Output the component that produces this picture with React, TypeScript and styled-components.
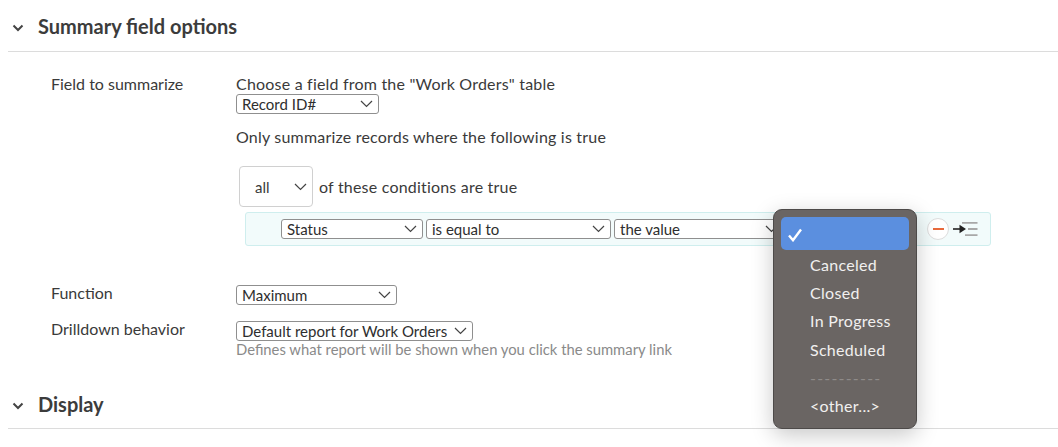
import React from 'react'
import styled, { createGlobalStyle } from 'styled-components'

const GlobalStyle = createGlobalStyle`
  html, body {
    margin: 0;
    padding: 0;
    background: #fff;
    overflow: hidden;
  }
  body {
    font-family: Lato, "Open Sans", sans-serif;
    color: #3a3a3a;
  }
`

const Chevron = () => (
  <svg width="13" height="8" viewBox="0 0 13 8" fill="none">
    <path d="M1 1l5.500 5.500L12 1" stroke="#444" strokeWidth="1.2" />
  </svg>
)

const FieldSelect = ({ label, width }: { label: string; width: number }) => (
  <SelectBox $width={width}>
    <span>{label}</span>
    <Chevron />
  </SelectBox>
)

const SectionTitle = ({ title, height }: { title: string; height: number }) => (
  <SectionHeader $height={height}>
    <svg width="12" height="8" viewBox="0 0 12 8" fill="none">
      <path d="M1.500 1.500L6 6l4.500-4.500" stroke="#444" strokeWidth="2" />
    </svg>
    <h2>{title}</h2>
  </SectionHeader>
)

const App = () => {
  return (
    <Page>
      <GlobalStyle />
      <SectionTitle title="Summary field options" height={52} />
      <FormGrid>
        <Label>Field to summarize</Label>
        <div>
          <Line>Choose a field from the "Work Orders" table</Line>
          <FieldSelect label="Record ID#" width={143} />
          <OnlyLine>Only summarize records where the following is true</OnlyLine>
          <AllRow>
            <AllSelect>
              <span>all</span>
              <Chevron />
            </AllSelect>
            <span>of these conditions are true</span>
          </AllRow>
        </div>
      </FormGrid>
      <ConditionRow>
        <FieldSelect label="Status" width={142} />
        <FieldSelect label="is equal to" width={185} />
        <FieldSelect label="the value" width={170} />
        <RowActions>
          <RemoveButton>
            <i />
          </RemoveButton>
          <svg width="25" height="16" viewBox="0 0 25 16" fill="none">
            <path d="M0 8h8" stroke="#222" strokeWidth="1.6" />
            <path d="M6.500 3.800L13 8l-6.500 4.200z" fill="#222" />
            <path d="M9 1.800h15.500M15 8h9.500M12 14.200h12.500" stroke="#a8a8a8" strokeWidth="1.800" />
          </svg>
        </RowActions>
      </ConditionRow>
      <FunctionGrid>
        <TightLabel>Function</TightLabel>
        <FieldSelect label="Maximum" width={161} />
      </FunctionGrid>
      <DrillGrid>
        <TightLabel>Drilldown behavior</TightLabel>
        <div>
          <FieldSelect label="Default report for Work Orders" width={237} />
          <Help>Defines what report will be shown when you click the summary link</Help>
        </div>
      </DrillGrid>
      <DisplaySection>
        <SectionTitle title="Display" height={50} />
      </DisplaySection>
      <Popup>
        <Selected>
          <svg width="14" height="14" viewBox="0 0 14 14" fill="none">
            <path d="M1 7.500L5 12.200 13 1.500" stroke="#fff" strokeWidth="2.400" />
          </svg>
        </Selected>
        <Option>Canceled</Option>
        <Option>Closed</Option>
        <Option>In Progress</Option>
        <Option>Scheduled</Option>
        <Option $muted>----------</Option>
        <Option>&lt;other...&gt;</Option>
      </Popup>
    </Page>
  )
}

export default App

const Page = styled.div`
  position: relative;
  width: 1058px;
  height: 447px;
  overflow: hidden;
  font-size: 16px;
  letter-spacing: 0.2px;
`

const SectionHeader = styled.div<{ $height: number }>`
  display: flex;
  align-items: center;
  gap: 14px;
  height: ${(p) => p.$height}px;
  box-sizing: border-box;
  margin-left: 8px;
  padding: 1px 0 0 4px;
  border-bottom: 1px solid #dcdcdc;
  svg {
    margin-top: 4px;
  }
  h2 {
    margin: 0;
    font-size: 20px;
    font-weight: 700;
    letter-spacing: 0;
    color: #3c3c3c;
  }
`

const FormGrid = styled.div`
  display: grid;
  grid-template-columns: 185px 1fr;
  padding: 22px 0 0 51px;
`

const Label = styled.div`
  line-height: 20px;
  letter-spacing: 0;
`

const TightLabel = styled(Label)`
  margin-top: -2px;
`

const Line = styled.div`
  line-height: 20px;
  height: 20px;
`

const SelectBox = styled.div<{ $width: number }>`
  display: flex;
  align-items: center;
  justify-content: space-between;
  flex: none;
  box-sizing: border-box;
  width: ${(p) => p.$width}px;
  height: 20px;
  padding: 0 5px 1px 5px;
  background: #fff;
  border: 1px solid #8f8f8f;
  border-radius: 3px;
  font-size: 15px;
  letter-spacing: 0;
  line-height: 18px;
  color: #2e2e2e;
  white-space: nowrap;
`

const OnlyLine = styled.div`
  margin-top: 13px;
  line-height: 20px;
`

const AllRow = styled.div`
  display: flex;
  align-items: center;
  gap: 6px;
  margin: 19px 0 0 3px;
  line-height: 18px;
`

const AllSelect = styled.div`
  display: flex;
  align-items: center;
  justify-content: space-between;
  box-sizing: border-box;
  width: 74px;
  height: 41px;
  padding: 0 5px 0 15px;
  border: 1px solid #d0d0d0;
  border-radius: 4px;
  font-size: 15px;
  letter-spacing: 0;
`

const ConditionRow = styled.div`
  display: flex;
  align-items: center;
  gap: 3px;
  box-sizing: border-box;
  width: 746px;
  height: 34px;
  margin: 5px 0 0 245px;
  padding-left: 35px;
  background: #f2fbfb;
  border: 1px solid #cfeeee;
  border-radius: 3px;
`

const RowActions = styled.div`
  display: flex;
  align-items: center;
  gap: 4px;
  margin-left: auto;
  padding-right: 12px;
`

const RemoveButton = styled.div`
  display: flex;
  align-items: center;
  justify-content: center;
  box-sizing: border-box;
  width: 22px;
  height: 22px;
  background: #fff;
  border: 1px solid #ddd;
  border-radius: 50%;
  i {
    width: 11px;
    height: 2px;
    background: #e8693c;
  }
`

const FunctionGrid = styled.div`
  display: grid;
  grid-template-columns: 185px 1fr;
  align-items: start;
  padding: 39px 0 0 51px;
`

const DrillGrid = styled(FunctionGrid)`
  padding-top: 16px;
`

const Help = styled.div`
  font-size: 14.800px;
  letter-spacing: 0;
  line-height: 17px;
  color: #8a8a8a;
`

const DisplaySection = styled.div`
  margin-top: 21px;
`

const Popup = styled.div`
  position: absolute;
  left: 773px;
  top: 209px;
  box-sizing: border-box;
  width: 144px;
  height: 220px;
  padding: 7px 7px 0;
  background: #6a6563;
  border: 1px solid #4d4a49;
  border-radius: 9px;
  box-shadow: 0 6px 22px rgba(0, 0, 0, 0.22);
`

const Selected = styled.div`
  display: flex;
  align-items: center;
  height: 33px;
  margin-bottom: 0.500px;
  padding: 3px 0 0 7px;
  box-sizing: border-box;
  background: #5b8fdf;
  border-radius: 5px;
`

const Option = styled.div<{ $muted?: boolean }>`
  height: 28.400px;
  line-height: 28.400px;
  padding-left: 29px;
  color: ${(p) => (p.$muted ? '#8f8b89' : '#f1f0ef')};
  letter-spacing: ${(p) => (p.$muted ? '1.200px' : '0.3px')};
`
